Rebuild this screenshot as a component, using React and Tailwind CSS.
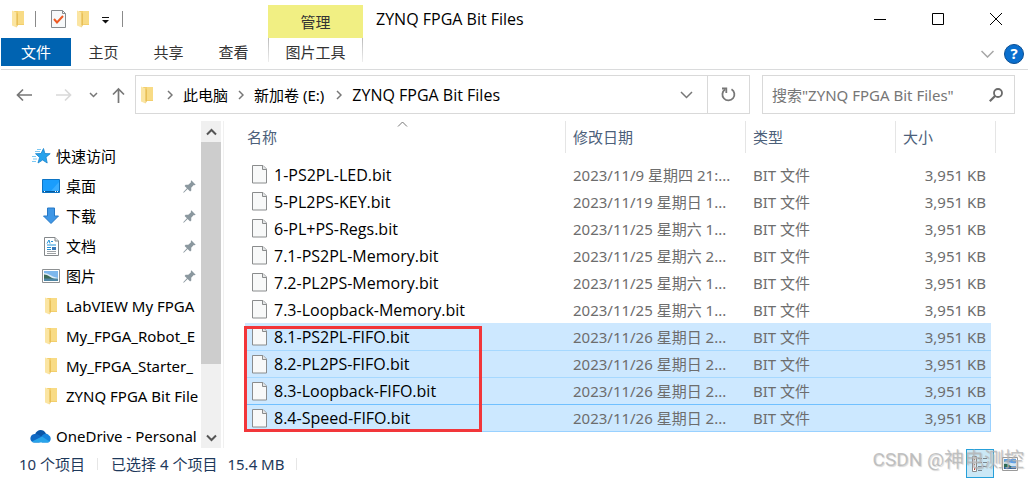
import React, { useState } from 'react';

const files = [
  { name: '1-PS2PL-LED.bit', date: '2023/11/9 星期四 21:...' },
  { name: '5-PL2PS-KEY.bit', date: '2023/11/19 星期日 1...' },
  { name: '6-PL+PS-Regs.bit', date: '2023/11/25 星期六 1...' },
  { name: '7.1-PS2PL-Memory.bit', date: '2023/11/25 星期六 2...' },
  { name: '7.2-PL2PS-Memory.bit', date: '2023/11/25 星期六 1...' },
  { name: '7.3-Loopback-Memory.bit', date: '2023/11/25 星期六 1...' },
  { name: '8.1-PS2PL-FIFO.bit', date: '2023/11/26 星期日 2...', selected: true },
  { name: '8.2-PL2PS-FIFO.bit', date: '2023/11/26 星期日 2...', selected: true },
  { name: '8.3-Loopback-FIFO.bit', date: '2023/11/26 星期日 2...', selected: true },
  { name: '8.4-Speed-FIFO.bit', date: '2023/11/26 星期日 2...', selected: true, focused: true },
];

const FolderIcon = () => (
  <svg className="shrink-0" width="12" height="18" viewBox="0 0 12 18" aria-hidden="true">
    <path d="M2 1h10v14H2z" fill="#f3cf6c" />
    <path d="M6 1h6v13H6z" fill="#f8db85" />
    <path d="M0 .5l4.500 2V17.500L0 15.500z" fill="#fbe5a2" />
    <path d="M4.500 2.500v15L6 15V4z" fill="#e8bf58" />
  </svg>
);

const FileIcon = () => (
  <svg className="shrink-0" width="15" height="19" viewBox="0 0 15 19" aria-hidden="true">
    <path d="M.5.5h10.500l3.500 3.500v14H.5z" fill="#f8f9f9" stroke="#8a8c8d" />
    <path d="M10.500.5v4h4" fill="#e4e6e7" stroke="#8a8c8d" />
  </svg>
);

const PinIcon = () => (
  <svg className="shrink-0" width="13" height="13" viewBox="0 0 13 13" aria-hidden="true">
    <path d="M8.300.3l4.400 4.400-1.300.5-.6-.1-2.600 2.700.1 2.700-1.200 1L4.600 9 .8 12.700l-.6-.5L3.900 8.300 1.600 5.900l1-1.200 2.700.1L8 2.200 7.800 1.500z" fill="#8b989f" />
  </svg>
);

const Chevron = ({ className, d = 'M1 1l4 4-4 4', w = 6, h = 10 }) => (
  <svg className={className} width={w} height={h} viewBox={`0 0 ${w} ${h}`} fill="none" stroke="currentColor" strokeWidth="1.500" aria-hidden="true">
    <path d={d} />
  </svg>
);

const StarIcon = () => (
  <svg width="19" height="16" viewBox="0 0 19 16" aria-hidden="true">
    <path d="M11.500 .5l1.400 5 5.300.2-4.200 3.500 1.200 5.800-4.600-3-4.600 3 1.600-5.600L3.500 5.700 9 5.500z" fill="#27a2ec" stroke="#1683cc" strokeWidth=".8" />
    <path d="M5 1.500h4M3 3.500h5M0 8.500h4M1 11h4M0 13.500h4" stroke="#7cc8f3" />
  </svg>
);

const DesktopIcon = () => (
  <svg width="18" height="14" viewBox="0 0 18 14" aria-hidden="true">
    <path d="M.5.5h17v13H.5z" fill="#1a9dfc" stroke="#0d74c4" />
    <path d="M9 12L17 3v9z" fill="#39adff" />
    <path d="M1 12.500h16" stroke="#075a9b" />
    <path d="M2 12.500h1M13 12.500h1M15 12.500h1" stroke="#fff" />
  </svg>
);

const DownloadIcon = () => (
  <svg width="18" height="18" viewBox="0 0 18 18" aria-hidden="true">
    <path d="M5.500 1h7v8h4L9 16.500 1.500 9h4z" fill="#3f97e6" stroke="#2678c5" />
  </svg>
);

const DocumentIcon = () => (
  <svg width="15" height="19" viewBox="0 0 15 19" aria-hidden="true">
    <path d="M.5.500h10.500l3.500 3.500v14.500H.5z" fill="#fff" stroke="#84888b" />
    <path d="M11 .5V4h3.500" fill="#e4e6e7" stroke="#84888b" />
    <path d="M3 6.500L5 3l1 3.500M7 4.500h2M3 8h9M3 10.500h4M3 12.500h4" fill="none" stroke="#2493d8" />
    <path d="M8 10h4v3H8z" fill="#3a78b8" />
    <path d="M3 14.500h9M3 16.500h9" stroke="#9da1a4" />
  </svg>
);

const PictureIcon = () => (
  <svg width="18" height="14" viewBox="0 0 18 14" aria-hidden="true">
    <path d="M.5.5h17v13H.5z" fill="#fff" stroke="#8d9092" />
    <path d="M2 2h14v10H2z" fill="#7db7ec" />
    <path d="M2 4c4 0 6 3 14 5v1H2z" fill="#dcebf5" />
    <path d="M2 5.500c4 0 6 3 11 4.500H2z" fill="#3c6b58" />
    <path d="M2 9.500h14V12H2z" fill="#4f87a5" />
  </svg>
);

const CloudIcon = () => (
  <svg width="21" height="14" viewBox="0 0 21 14" aria-hidden="true">
    <path d="M5 5.500C6.500.5 13-1 16 4.500L12 10z" fill="#0a56a8" />
    <path d="M4.500 13.500C-1 13.500-1 5.500 4.500 5c3-.5 5 1 8 3l-3 5.500z" fill="#1069c4" />
    <path d="M11.500 7.500c1-3 6-4 7.500-1 2.500 1 2.500 7-1.500 7H12z" fill="#1684dd" />
    <path d="M2 12.500L12 7.500l7.500 5c-.5.700-1.500 1-2.500 1H4.500c-1 0-2-.3-2.500-1z" fill="#28a4ea" />
  </svg>
);

const quickLinks = [
  { label: '桌面', icon: <DesktopIcon />, pinned: true },
  { label: '下载', icon: <DownloadIcon />, pinned: true },
  { label: '文档', icon: <DocumentIcon />, pinned: true },
  { label: '图片', icon: <PictureIcon />, pinned: true },
  { label: 'LabVIEW My FPGA', icon: <FolderIcon /> },
  { label: 'My_FPGA_Robot_E', icon: <FolderIcon /> },
  { label: 'My_FPGA_Starter_', icon: <FolderIcon /> },
  { label: 'ZYNQ FPGA Bit File', icon: <FolderIcon /> },
];

function TitleBar() {
  return (
    <div className="flex h-[38px]">
      <div className="flex w-[268px] items-center pl-3 pb-px">
        <FolderIcon />
        <span className="ml-[11px] h-4 w-px bg-[#8a8a8a]" />
        <button aria-label="属性" className="ml-[15px]">
          <svg width="15" height="18" viewBox="0 0 15 18" aria-hidden="true">
            <path d="M.5.500h11l3 3v14H.5z" fill="#f7f9fa" stroke="#878b8e" />
            <path d="M11.500.5v3h3" fill="none" stroke="#878b8e" />
            <path d="M3 9l3 3.500L12 6" fill="none" stroke="#ee5a24" strokeWidth="2" />
          </svg>
        </button>
        <button aria-label="新建文件夹" className="ml-[11px]">
          <FolderIcon />
        </button>
        <button aria-label="自定义快速访问工具栏" className="ml-[13px] pt-1">
          <svg width="7" height="7" viewBox="0 0 7 7" aria-hidden="true">
            <path d="M0 .5h7" stroke="#111" />
            <path d="M0 3h7L3.500 6.500z" fill="#111" />
          </svg>
        </button>
        <span className="ml-[13px] h-4 w-px bg-[#8a8a8a]" />
      </div>
      <div className="flex h-[33px] w-[95px] items-center justify-center self-end bg-[#f1ef83] text-[#333]">管理</div>
      <h1 className="ml-[13px] flex-1 self-center whitespace-nowrap font-['Open_Sans',sans-serif] text-base leading-5">ZYNQ FPGA Bit Files</h1>
      <div className="mr-[3px] flex">
        <button aria-label="最小化" className="flex w-[58px] items-center justify-center">
          <svg width="12" height="13" viewBox="0 0 12 13" stroke="#000"><path d="M0 6.500h12" /></svg>
        </button>
        <button aria-label="最大化" className="flex w-[58px] items-center justify-center">
          <svg width="12" height="12" viewBox="0 0 12 12" fill="none" stroke="#000"><path d="M.5.5h11v11H.5z" /></svg>
        </button>
        <button aria-label="关闭" className="flex w-[58px] items-center justify-center">
          <svg width="12" height="12" viewBox="0 0 12 12" stroke="#000"><path d="M0 0l12 12M12 0L0 12" /></svg>
        </button>
      </div>
    </div>
  );
}

function Ribbon() {
  return (
    <div className="ml-px flex h-8 border-b border-[#dadbdc] text-[#333]">
      <button className="h-7 w-[70px] bg-[#0063b1] text-white">文件</button>
      <button className="h-7 w-[65px]">主页</button>
      <button className="h-7 w-[65px]">共享</button>
      <button className="h-7 w-[65px]">查看</button>
      <button className="ml-[2px] flex h-7 w-[95px] justify-between">
        <span className="h-6 w-px bg-linear-to-b from-[#bbb] to-[#eee]" />
        <span className="self-center">图片工具</span>
        <span className="h-6 w-px bg-linear-to-b from-[#bbb] to-[#eee]" />
      </button>
      <div className="ml-auto flex items-center gap-[10px] pr-1">
        <button aria-label="展开功能区" className="text-[#a6a6a6]">
          <Chevron w={13} h={8} d="M.5 1l6 6 6-6" />
        </button>
        <button aria-label="帮助" className="flex size-5 items-center justify-center rounded-full border border-[#0a4e92] bg-[#0a6fce] font-bold leading-none text-white">
          ?
        </button>
      </div>
    </div>
  );
}

function AddressBar() {
  const [query, setQuery] = useState('');

  return (
    <div className="flex items-center pt-[5px] pr-[13px]">
      <div className="flex w-[135px] shrink-0 items-center pl-4 text-[#777]">
        <button aria-label="后退">
          <svg width="17" height="14" viewBox="0 0 17 14" fill="none" stroke="currentColor" strokeWidth="1.700"><path d="M16 7H2M7 1.500L1.500 7 7 12.500" /></svg>
        </button>
        <button aria-label="前进" className="ml-[22px] text-[#d9d9d9]">
          <svg width="17" height="14" viewBox="0 0 17 14" fill="none" stroke="currentColor" strokeWidth="1.700"><path d="M1 7h14M10 1.500L15.500 7 10 12.500" /></svg>
        </button>
        <button aria-label="最近浏览的位置" className="ml-[17px]">
          <Chevron w={9} h={6} d="M1 1l3.500 3.500L8 1" />
        </button>
        <button aria-label="上移" className="ml-[14px]">
          <svg width="13" height="16" viewBox="0 0 13 16" fill="none" stroke="currentColor" strokeWidth="1.700"><path d="M6.500 16V2M1 7.500L6.500 2 12 7.500" /></svg>
        </button>
      </div>
      <div className="flex h-[39px] flex-1 border border-[#d9d9d9]">
        <nav className="flex flex-1 items-center whitespace-nowrap pl-[5px]">
          <FolderIcon />
          <Chevron className="ml-[14px] mr-[10px] text-[#777]" />
          <a href="#pc">此电脑</a>
          <Chevron className="mx-[10px] text-[#777]" />
          <a href="#e">新加卷 (E:)</a>
          <Chevron className="ml-3 mr-[10px] text-[#777]" />
          <a href="#zynq" className="font-['Open_Sans',sans-serif] text-base leading-5">ZYNQ FPGA Bit Files</a>
        </nav>
        <button aria-label="以前的位置" className="w-10 pl-[13px] text-[#777]">
          <Chevron w={13} h={8} d="M1 1l5.500 5.500L12 1" />
        </button>
        <button aria-label="刷新" className="flex w-[42px] items-center justify-center border-l border-[#d9d9d9] text-[#777]">
          <svg width="15" height="15" viewBox="0 0 15 15" fill="none" stroke="currentColor" strokeWidth="1.800">
            <path d="M10.500 2.300A6 6 0 1 1 4 2.500" />
            <path d="M1 1.500h4.300V6" />
          </svg>
        </button>
      </div>
      <label className="ml-3 flex h-[39px] w-[253px] shrink-0 items-center border border-[#d9d9d9] pl-[9px] pr-[11px]">
        <input
          type="text"
          aria-label="搜索"
          value={query}
          onChange={(e) => setQuery(e.target.value)}
          placeholder={'搜索"ZYNQ FPGA Bit Files"'}
          className="min-w-0 flex-1 outline-none placeholder:text-[#767676]"
        />
        <svg width="14" height="14" viewBox="0 0 14 14" fill="none" stroke="#6b6b6b" strokeWidth="1.800" aria-hidden="true">
          <circle cx="9" cy="5" r="4" />
          <path d="M6 8L.8 13.200" strokeWidth="2.200" />
        </svg>
      </label>
    </div>
  );
}

function Sidebar() {
  return (
    <div className="flex h-[327px] w-[224px] shrink-0 border-r border-[#f0f0f0]">
      <nav className="w-[201px] overflow-hidden whitespace-nowrap pt-5">
        <a href="#quick" className="flex h-[30px] items-center pl-8">
          <StarIcon />
          <span className="ml-[5px]">快速访问</span>
        </a>
        {quickLinks.map((link) => (
          <a key={link.label} href={`#${link.label}`} className="flex h-[30px] items-center pl-10 pr-[5px]">
            <span className="flex w-[22px] shrink-0 justify-center">{link.icon}</span>
            <span className="ml-1 flex-1">{link.label}</span>
            {link.pinned && <PinIcon />}
          </a>
        ))}
        <a href="#onedrive" className="mt-[10px] flex h-[30px] items-center pl-[30px]">
          <CloudIcon />
          <span className="ml-[5px]">OneDrive - Personal</span>
        </a>
      </nav>
      <div className="flex w-5 flex-col bg-[#f0f0f0] text-[#555]">
        <button aria-label="向上滚动" className="flex h-[21px] items-center justify-center">
          <svg width="11" height="8" viewBox="0 0 11 8" fill="none" stroke="currentColor" strokeWidth="2"><path d="M1 6.500L5.500 2 10 6.500" /></svg>
        </button>
        <div className="h-[222px] bg-[#cdcdcd]" />
        <button aria-label="向下滚动" className="mt-auto flex h-[21px] items-center justify-center">
          <svg width="11" height="8" viewBox="0 0 11 8" fill="none" stroke="currentColor" strokeWidth="2"><path d="M1 1.500L5.500 6 10 1.500" /></svg>
        </button>
      </div>
    </div>
  );
}

function FileRow({ file, first }) {
  let cell = 'p-0';
  if (file.focused) {
    cell = 'p-0 bg-[#cce8ff] border-t border-t-[#70c0ff] border-b border-b-[#99d1ff]';
  } else if (file.selected) {
    cell = first ? 'p-0 bg-[#cde8ff]' : 'p-0 bg-[#cde8ff] border-t border-[#a6d8ff]';
  }

  return (
    <tr className={file.focused ? 'h-7 text-[#6d6d6d]' : 'h-[27px] text-[#6d6d6d]'}>
      <td className={cell}>
        <div className="flex items-center pl-[7px] text-black">
          <FileIcon />
          <span className="ml-[7px] font-['Open_Sans',sans-serif] text-base leading-5">{file.name}</span>
        </div>
      </td>
      <td className={cell}><span className="pl-2">{file.date}</span></td>
      <td className={cell}><span className="pl-2">BIT 文件</span></td>
      <td className={file.focused ? `${cell} border-r border-r-[#99d1ff] text-right` : `${cell} text-right`}>
        <span className={file.focused ? 'pr-1' : 'pr-[5px]'}>3,951 KB</span>
      </td>
      <td className="p-0" />
    </tr>
  );
}

function FileTable() {
  return (
    <div className="relative flex-1 pl-[21px] pr-8">
      <table className="w-full table-fixed border-separate border-spacing-0 whitespace-nowrap text-left">
        <colgroup>
          <col />
          <col className="w-[180px]" />
          <col className="w-[150px]" />
          <col className="w-24" />
          <col className="w-[5px]" />
        </colgroup>
        <thead className="text-[#4c607a]">
          <tr className="h-8">
            <th className="relative p-0 pl-[2px] font-normal">
              名称
              <svg className="absolute left-[152px] top-0" width="11" height="6" viewBox="0 0 11 6" fill="none" stroke="#777"><path d="M1 5.500L5.500 1 10 5.500" /></svg>
            </th>
            <th className="border-l border-[#e5e5e5] p-0 pl-[7px] font-normal">修改日期</th>
            <th className="border-l border-[#e5e5e5] p-0 pl-[7px] font-normal">类型</th>
            <th colSpan={2} className="border-x border-[#e5e5e5] p-0 pl-[7px] font-normal">大小</th>
          </tr>
        </thead>
        <tbody>
          <tr className="h-2" aria-hidden="true"><td colSpan={5} className="p-0" /></tr>
          {files.map((file, i) => (
            <FileRow key={file.name} file={file} first={!files[i - 1]?.selected} />
          ))}
        </tbody>
      </table>
      {/* red frame round the selected files */}
      <div className="pointer-events-none absolute left-5 top-[205px] h-[106px] w-[238px] border-3 border-[#f2363a]" />
    </div>
  );
}

function StatusBar() {
  return (
    <div className="relative flex h-[31px] items-center pl-[19px] text-[#1e395b]">
      <span>10 个项目</span>
      <span className="ml-3 h-3 w-px bg-[#e6e6e6]" />
      <span className="ml-[13px]">已选择 4 个项目</span>
      <span className="ml-[10px]">15.4 MB</span>
      <span className="ml-3 h-3 w-px bg-[#e6e6e6]" />
      <div className="ml-auto flex items-center gap-2 pr-[10px]">
        <button aria-label="详细信息" className="flex h-[29px] w-7 items-center justify-center border border-[#26a0da] bg-[#cbe8f6]">
          <svg width="16" height="16" viewBox="0 0 16 16" aria-hidden="true">
            <path d="M.5.500h4v15h-4z" fill="#fff" stroke="#8b8b8b" />
            <path d="M2 3.500h1M2 8.500h1" stroke="#444" />
            <path d="M2 13h1" stroke="#c0392b" strokeWidth="2" />
            <path d="M6 2.500h4M11 2.500h4M6 6.500h4M11 6.500h4M6 10.500h4M11 10.500h4M6 14.500h4" stroke="#7d8890" />
          </svg>
        </button>
        <button aria-label="大缩略图">
          <svg width="16" height="14" viewBox="0 0 16 14" aria-hidden="true">
            <path d="M.5.500h15v13H.5z" fill="#fff" stroke="#9a9a9a" />
            <path d="M2 2h12v10H2z" fill="#5da0ea" />
            <path d="M2 5c4-1 7 2 12 1v3H2z" fill="#d3e6f3" />
            <path d="M2 7c3-1 5 1 8 3H2z" fill="#2f6a4f" />
            <path d="M2 10h12v2H2z" fill="#2c5f9c" />
          </svg>
        </button>
      </div>
      <div className="pointer-events-none absolute right-1 top-0 flex items-center whitespace-nowrap font-['Roboto','Noto_Sans_CJK_SC',sans-serif] text-[19px] leading-6 text-[#b4b4b4]/80 [text-shadow:1px_1px_1px_#9996]">
        <span>CSDN @</span>
        <span className="text-xl leading-6">神电测控</span>
      </div>
    </div>
  );
}

function App() {
  return (
    <div className="bg-white font-['Noto_Sans','Noto_Sans_CJK_SC',sans-serif] text-[15px] leading-5 text-black">
      <TitleBar />
      <Ribbon />
      <AddressBar />
      <main className="mt-[7px] flex">
        <Sidebar />
        <FileTable />
      </main>
      <StatusBar />
    </div>
  );
}

export default App;
